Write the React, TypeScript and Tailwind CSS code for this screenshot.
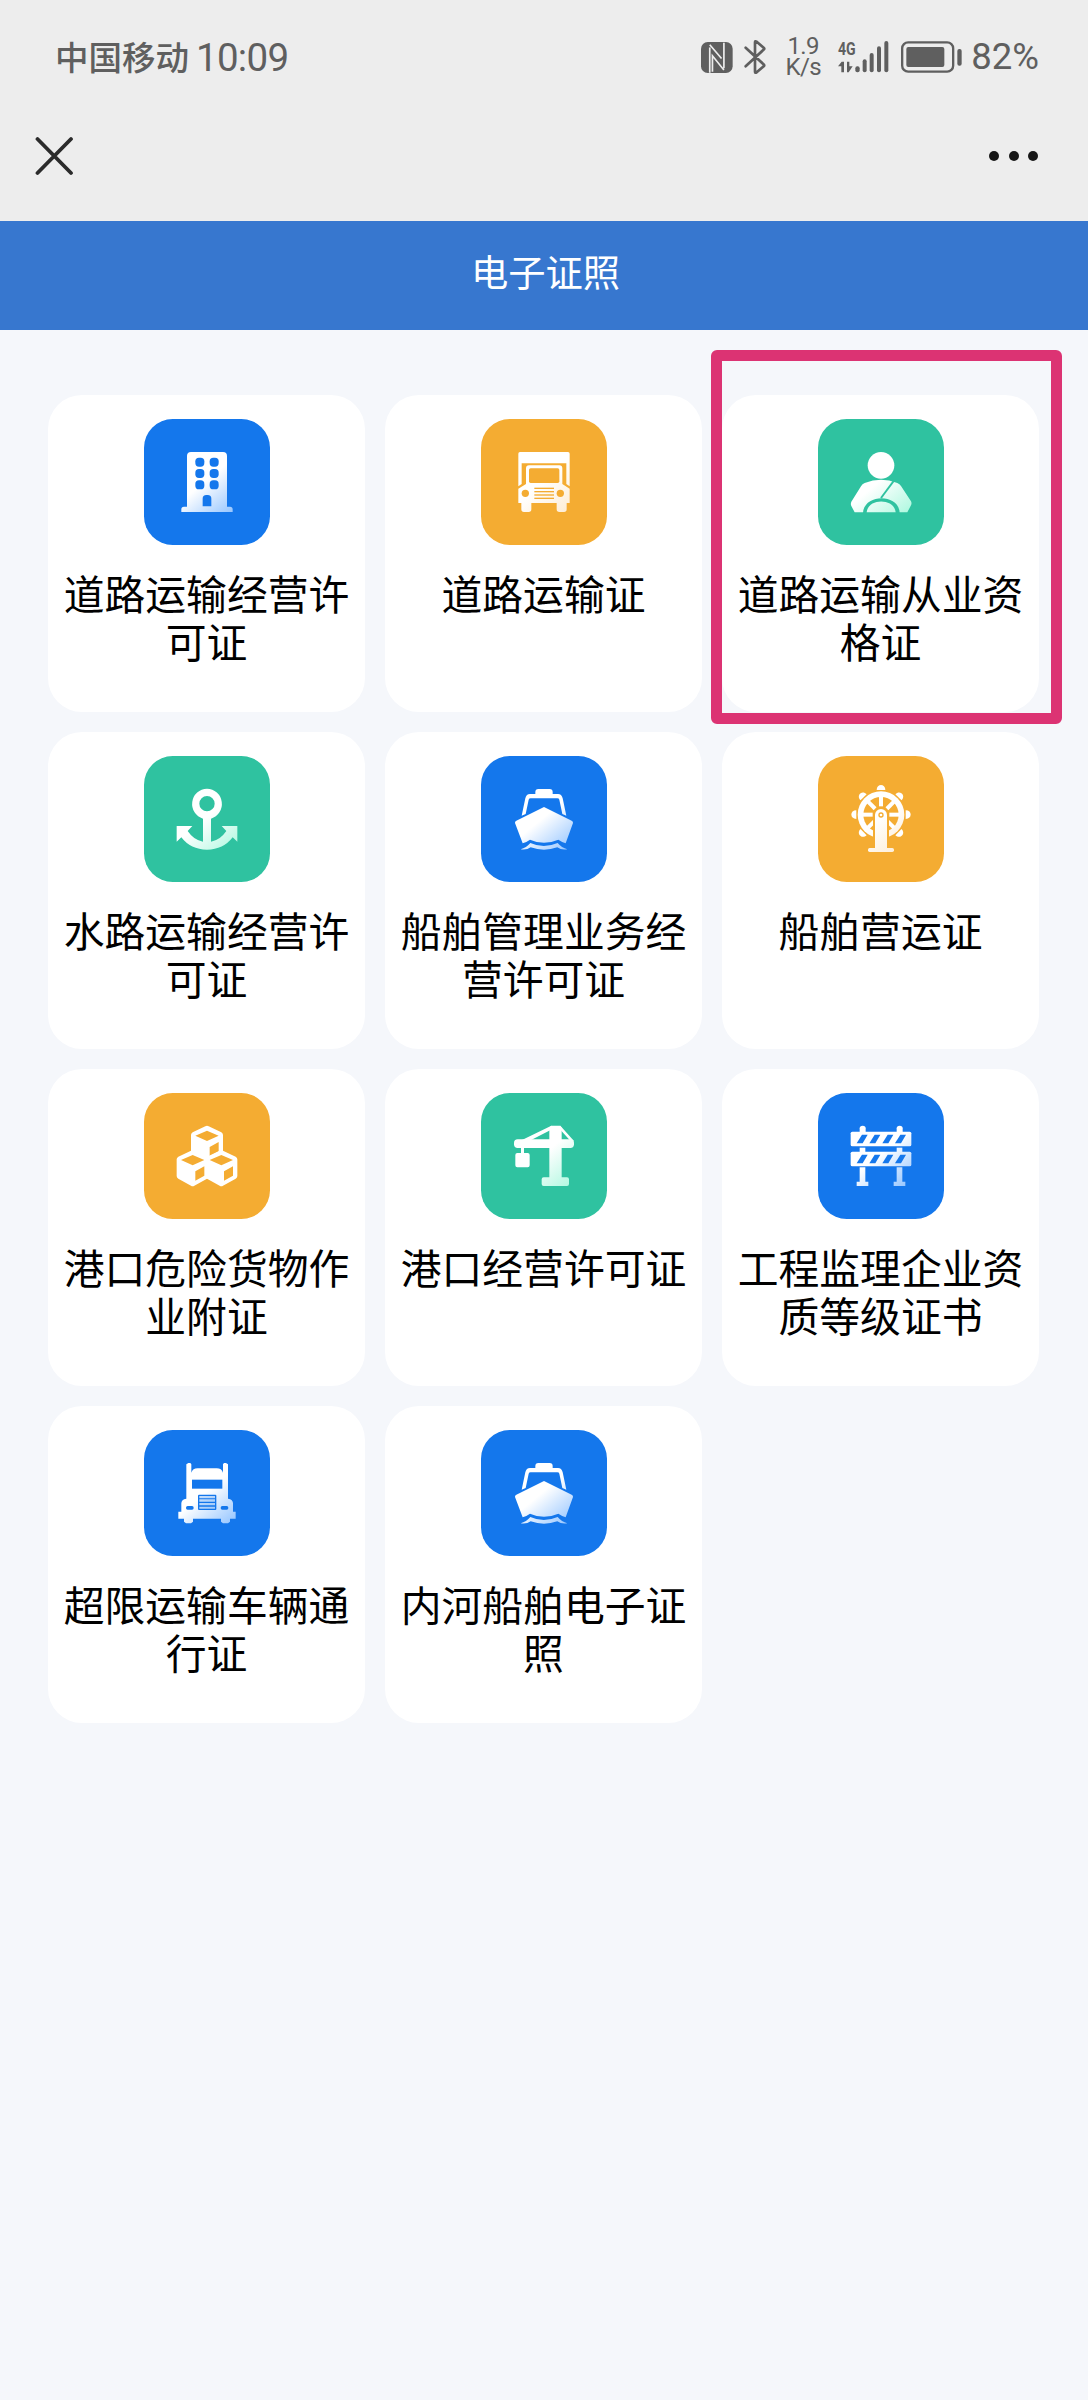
import React, { type ReactNode } from 'react'

type Tone = 'blue' | 'orange' | 'green'

const TONES: Record<Tone, { bg: string; tint: string }> = {
      blue: { bg: '#1477ec', tint: '#93c4ff' },
      orange: { bg: '#f4ac32', tint: '#fdebd2' },
      green: { bg: '#2fc2a0', tint: '#b0f8e0' },
}

interface License {
      id: string
      name: string
      tone: Tone
      icon: (bg: string) => ReactNode
      marked?: boolean
}

const building = (bg: string) => (
      <>
            <path d="M129 263V111q0-12 12-12h96q12 0 12 12v152h9q8 0 8 8v8H112v-8q0-8 8-8z" />
            <g fill={bg}>
                  {[129, 163, 197].map((y) => (
                        <React.Fragment key={y}>
                              <rect x="154" y={y - 13} width="27" height="27" rx="11" />
                              <rect x="197" y={y - 13} width="27" height="27" rx="11" />
                        </React.Fragment>
                  ))}
                  <path d="M176 262v-23q0-11 11-11h4q11 0 11 11v23z" />
            </g>
      </>
)

const truck = (bg: string) => (
      <>
            <path d="M112 104q0-5 5-5h144q5 0 5 5v98l-10-7v-62H122v62l-10 7z" />
            <path d="M135 195v-47q0-9 9-9h91q9 0 9 9v47l22 14v43h-9v19q0 8-8 8h-14q-8 0-8-8v-19h-76v19q0 8-8 8h-14q-8 0-8-8v-19h-9v-43z" />
            <g fill={bg}>
                  <rect x="144" y="148" width="91" height="44" rx="5" />
                  <circle cx="133" cy="223" r="11" />
                  <circle cx="238" cy="223" r="11" />
                  {[206, 216, 226, 236].map((y) => (
                        <rect key={y} x="160" y={y} width="59" height="4" />
                  ))}
            </g>
      </>
)

const driver = (bg: string) => (
      <>
            <circle cx="189" cy="139" r="40" />
            <path d="M140 192q49-20 98 0 7 3 11 9l30 46q3 6 0 12l-11 21H110l-10-19q-3-6 0-13l29-46q4-7 11-10z" />
            <path d="M227 186l-38 51" stroke={bg} strokeWidth="6" />
            <path d="M135 282c2-58 108-60 110 0z" fill={bg} />
            <path d="M146 280c4-43 83-43 87 0z" />
      </>
)

const anchor = () => (
      <path
            fillRule="evenodd"
            d="M189 98a46 46 0 0 1 12 90v69q28-5 46-32l-14-15h47v47l-14-13q-28 37-77 37t-77-37l-14 13v-47h47l-14 15q18 27 46 32v-69a46 46 0 0 1 12-90zm0 22a23 23 0 1 0 0 46 23 23 0 0 0 0-46z"
      />
)

const ship = () => (
      <>
            <path d="M122 179l11-52q3-13 14-13h16v-6q0-9 9-9h34q9 0 9 9v6h16q11 0 14 13l11 52-12-5-9-43q-1-4-6-4h-80q-5 0-6 4l-9 43z" />
            <path d="M106 194l83-41 83 41q5 3 4 7l-22 61q-10-3-22-11-20 9-43 9t-42-9q-11 8-22 11l-23-61q-1-4 4-7z" />
            <path d="M119 280q17-5 29-19 40 18 82 0 12 14 29 19-18 3-30-6-40 14-80 0-12 9-30 6z" />
      </>
)

const helm = (bg: string) => (
      <>
            {/* the bottom handle is hidden by the stand */}
            {[0, 45, 90, 135, 225, 270, 315].map((deg) => (
                  <path
                        key={deg}
                        transform={`rotate(${deg} 189 176)`}
                        d="M176 102c0-20 26-20 26 0z"
                  />
            ))}
            <circle cx="189" cy="176" r="70" />
            <circle cx="189" cy="176" r="53" fill={bg} />
            {[0, 45, 90, 135, 225, 270, 315].map((deg) => (
                  <rect
                        key={deg}
                        x="183"
                        y="121"
                        width="12"
                        height="30"
                        transform={`rotate(${deg} 189 176)`}
                  />
            ))}
            <path
                  d="M168 288V177a21 21 0 0 1 42 0v111z"
                  stroke={bg}
                  strokeWidth="6"
            />
            <rect x="150" y="276" width="78" height="12" rx="5" />
            <circle cx="189" cy="177" r="8" fill={bg} />
            <circle cx="189" cy="177" r="4" />
      </>
)

const boxes = (bg: string) => (
      <>
            {[
                  [189, 98],
                  [146, 171],
                  [232, 171],
            ].map(([x, y]) => (
                  <g key={x} transform={`translate(${x} ${y})`}>
                        <path d="M-5 2q5-3 10 0l38 18q5 3 5 8v50q0 5-5 8L5 107q-5 3-10 0l-38-21q-5-3-5-8V28q0-5 5-8z" />
                        <path d="M-35 30L0 15l35 15L0 46zM8 64l27-15v28L8 92z" fill={bg} />
                  </g>
            ))}
      </>
)

const crane = () => (
      <>
            <rect x="99" y="139" width="180" height="26" rx="11" />
            <path d="M205 104l5-6h28l4 6v149h16q6 0 6 6v14q0 6-6 6h-70q-6 0-6-6v-14q0-6 6-6h17z" />
            <path d="M211 98l-88 43 26 1 60-31zM238 98l41 46-11-1-32-35z" />
            <path d="M120 162h9v18h11q6 0 6 6v31q0 6-6 6h-31q-6 0-6-6v-31q0-6 6-6h11z" />
      </>
)

const barrier = (bg: string) => (
      <>
            {[125, 236].map((x) => (
                  <React.Fragment key={x}>
                        <path d={`M${x} 118v-12q0-8 9-8t9 8v12z`} />
                        <path d={`M${x} 164h17v14h-17z`} />
                        <path d={`M${x} 223h17v43h9v13h-35v-13h9z`} />
                  </React.Fragment>
            ))}
            {[116, 176].map((y) => (
                  <React.Fragment key={y}>
                        <rect x="98" y={y} width="182" height="44" rx="5" />
                        {[132, 170, 209, 247].map((x) => (
                              <path key={x} d={`M${x} ${y + 9}h17l-15 26h-18z`} fill={bg} />
                        ))}
                  </React.Fragment>
            ))}
      </>
)

const lorry = (bg: string) => (
      <>
            <path d="M127 103l6-4h6l3 4v25q4-13 19-13h57q15 0 19 13v-25l3-4h6l6 4v103q15 2 15 14v25h8v21h-17v9l-6 5h-15l-6-5v-9h-84v9l-6 5h-15l-6-5v-9h-17v-21h9v-25q0-12 15-14z" />
            <g fill={bg}>
                  <rect x="144" y="149" width="91" height="27" />
                  <rect x="162" y="194" width="55" height="46" rx="3" />
                  <rect x="126" y="228" width="23" height="11" rx="5" />
                  <rect x="230" y="228" width="23" height="11" rx="5" />
            </g>
            <path d="M166 198h47v7h-47zM166 208h47v7h-47zM166 219h47v7h-47zM166 230h47v6h-47z" opacity=".75" />
      </>
)

const LICENSES: License[] = [
      { id: 'road-business', name: '道路运输经营许可证', tone: 'blue', icon: building },
      { id: 'road', name: '道路运输证', tone: 'orange', icon: truck },
      { id: 'road-driver', name: '道路运输从业资格证', tone: 'green', icon: driver, marked: true },
      { id: 'water-business', name: '水路运输经营许可证', tone: 'green', icon: anchor },
      { id: 'ship-management', name: '船舶管理业务经营许可证', tone: 'blue', icon: ship },
      { id: 'ship-operation', name: '船舶营运证', tone: 'orange', icon: helm },
      { id: 'port-dangerous', name: '港口危险货物作业附证', tone: 'orange', icon: boxes },
      { id: 'port-business', name: '港口经营许可证', tone: 'green', icon: crane },
      { id: 'supervision', name: '工程监理企业资质等级证书', tone: 'blue', icon: barrier },
      { id: 'oversize', name: '超限运输车辆通行证', tone: 'blue', icon: lorry },
      { id: 'inland-ship', name: '内河船舶电子证照', tone: 'blue', icon: ship },
]

function StatusBar() {
      return (
            <div className="flex h-[114px] items-center justify-between pl-[55px] pr-[49px] text-[#5f5f5f]">
                  <div className="flex items-center">
                        <span className="pb-[3px] text-[33.5px] font-medium leading-none">
                              中国移动
                        </span>
                        <span className="ml-[7px] pt-0.5 font-['Roboto'] text-[38.5px] leading-none tracking-[-0.7px]">
                              10:09
                        </span>
                  </div>
                  <div className="flex items-center">
                        {/* NFC */}
                        <svg className="h-[31px] w-[32px]" viewBox="0 0 95 92">
                              <rect width="94" height="92" rx="20" fill="currentColor" />
                              <path
                                    d="M26 91V16M26 8l35 41M68 2v76M68 83L34 41V88"
                                    fill="none"
                                    stroke="#ededed"
                                    strokeWidth="5"
                              />
                        </svg>
                        {/* Bluetooth */}
                        <svg
                              className="ml-[11px] h-[36px] w-[22px]"
                              viewBox="0 0 66 108"
                              fill="none"
                              stroke="currentColor"
                              strokeWidth="8"
                              strokeLinejoin="round"
                              strokeLinecap="round"
                        >
                              <path d="M5 26l55 51q2 3-1 5L38 100q-5 3-5-2V10q0-5 5-2l21 18q3 3 1 5L5 82" />
                        </svg>
                        <div className="ml-[20px] flex w-[34px] flex-col items-center font-['Roboto'] text-[24px] leading-[21px] tracking-[-0.6px]">
                              <span>1.9</span>
                              <span>K/s</span>
                        </div>
                        {/* Signal */}
                        <svg
                              className="ml-[18px] h-[32px] w-[52px] overflow-visible"
                              viewBox="0 0 156 96"
                              fill="currentColor"
                        >
                              <text
                                    x="0"
                                    y="43"
                                    fontFamily="Roboto"
                                    fontWeight="700"
                                    fontSize="57"
                                    textLength="53"
                                    lengthAdjust="spacingAndGlyphs"
                              >
                                    4G
                              </text>
                              <path d="M0 76l11-14h7v32h-8V76zM27 62h7v14h10L32 94h-5z" />
                              <rect x="52" y="76" width="13" height="18" rx="6" />
                              <rect x="74" y="55" width="12" height="39" rx="6" />
                              <rect x="95" y="36" width="12" height="58" rx="6" />
                              <rect x="117" y="16" width="12" height="78" rx="6" />
                              <rect x="139" y="0" width="12" height="94" rx="6" />
                        </svg>
                        {/* Battery */}
                        <svg
                              className="ml-[11px] h-[32px] w-[62px]"
                              viewBox="0 0 186 96"
                              fill="currentColor"
                        >
                              <rect
                                    x="3.5"
                                    y="4"
                                    width="153"
                                    height="88"
                                    rx="18"
                                    fill="none"
                                    stroke="currentColor"
                                    strokeWidth="7"
                              />
                              <rect x="16" y="18" width="114" height="60" rx="6" />
                              <rect x="169" y="24" width="13" height="50" rx="6" />
                        </svg>
                        <span className="ml-[8px] font-['Roboto'] text-[36.5px] leading-none">
                              82%
                        </span>
                  </div>
            </div>
      )
}

function NavBar() {
      return (
            <div className="flex h-[107px] items-center justify-between pb-[23px] pl-[35px] pr-[50px]">
                  <svg
                        className="h-[40px] w-[39px]"
                        viewBox="0 0 39 40"
                        stroke="#2b2b2b"
                        strokeWidth="3.8"
                        strokeLinecap="round"
                  >
                        <path d="M2.5 3L36 37M36 3L2.5 37" />
                  </svg>
                  <div className="flex gap-[9.5px]">
                        <i className="size-[10px] rounded-full bg-[#171717]" />
                        <i className="size-[10px] rounded-full bg-[#171717]" />
                        <i className="size-[10px] rounded-full bg-[#171717]" />
                  </div>
            </div>
      )
}

function LicenseCard({ license }: { license: License }) {
      const { bg, tint } = TONES[license.tone]
      const gradientId = `fill-${license.id}`

      return (
            <button className="relative flex h-[317px] flex-col items-center rounded-[34px] bg-white px-[14px] pt-[24px]">
                  <svg className="size-[126px] shrink-0" viewBox="0 0 378 378">
                        <defs>
                              <linearGradient
                                    id={gradientId}
                                    gradientUnits="userSpaceOnUse"
                                    x1="170"
                                    y1="170"
                                    x2="265"
                                    y2="285"
                              >
                                    <stop offset="0.15" stopColor="#fff" />
                                    <stop offset="1" stopColor={tint} />
                              </linearGradient>
                        </defs>
                        <rect width="378" height="378" rx="86" fill={bg} />
                        <g fill={`url(#${gradientId})`}>{license.icon(bg)}</g>
                  </svg>
                  <span className="mt-[24px] w-[287px] break-all text-center text-[40.8px] leading-[48px] text-black">
                        {license.name}
                  </span>
                  {license.marked && (
                        <div className="pointer-events-none absolute -left-[11px] -top-[45px] z-10 h-[374px] w-[351px] rounded-[6px] border-[11px] border-[#dc3373]" />
                  )}
            </button>
      )
}

export default function App() {
      return (
            <div className="min-h-[2400px] w-[1088px] bg-[#f5f7fb] font-['Noto_Sans_CJK_SC',sans-serif]">
                  <div className="bg-[#ededed]">
                        <StatusBar />
                        <NavBar />
                  </div>
                  <header className="flex h-[109px] items-center justify-center bg-[#3777cf] pb-[8px] pl-[3px]">
                        <h1 className="text-[37.3px] leading-none text-white">电子证照</h1>
                  </header>
                  <main className="grid grid-cols-[repeat(3,317px)] gap-[20px] pl-[48px] pt-[65px]">
                        {LICENSES.map((license) => (
                              <LicenseCard key={license.id} license={license} />
                        ))}
                  </main>
            </div>
      )
}
